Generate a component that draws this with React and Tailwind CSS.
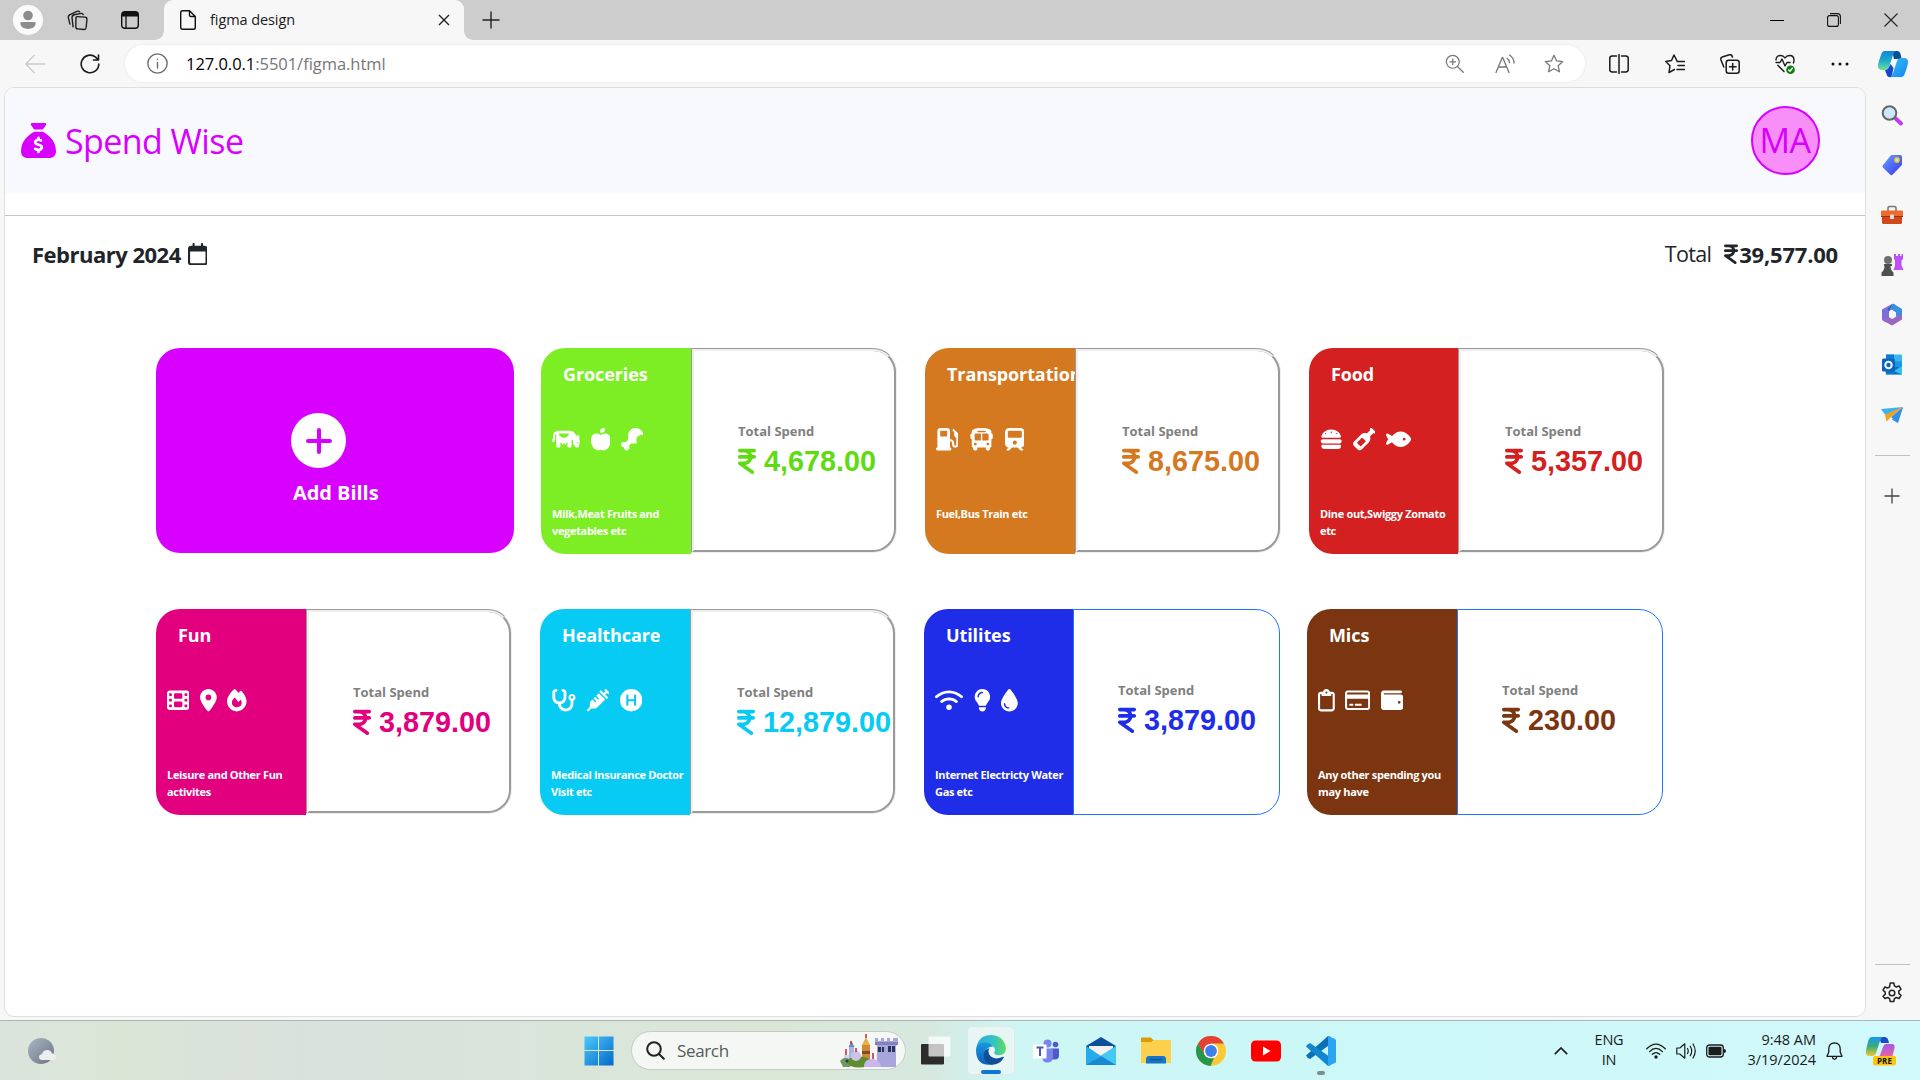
import React from "react";
import {
  FaCow, FaAppleWhole, FaDrumstickBite, FaGasPump, FaBus, FaTrain, FaBurger, FaWineBottle, FaFish,
  FaFilm, FaLocationDot, FaFire, FaStethoscope, FaSyringe, FaCircleH, FaWifi, FaLightbulb, FaDroplet,
  FaRegClipboard, FaRegCreditCard, FaWallet, FaRegCalendar, FaSackDollar, FaPlus, FaIndianRupeeSign,
} from "react-icons/fa6";

const W640 = "w-[28px]";
const W576 = "w-[25.2px]";
const W512 = "w-[22.4px]";
const W448 = "w-[19.6px]";
const W384 = "w-[16.8px]";

const CARDS = [
  { title: "Groceries", icons: [[FaCow, W640], [FaAppleWhole, W448], [FaDrumstickBite, W512]], lines: ["Milk,Meat Fruits and", "vegetables etc"], amount: "4,678.00", bg: "bg-[#7dee24]", fg: "text-[#5edb12]", box: "ml-[27px] w-[356px]", left: "w-[150px]", groove: true },
  { title: "Transportation", icons: [[FaGasPump, W512], [FaBus, W576], [FaTrain, W448]], lines: ["Fuel,Bus Train etc"], amount: "8,675.00", bg: "bg-[#d47920]", fg: "text-[#d47920]", box: "ml-[28px] w-[356px]", left: "w-[150px]", groove: true },
  { title: "Food", icons: [[FaBurger, W512], [FaWineBottle, W512], [FaFish, W576]], lines: ["Dine out,Swiggy Zomato", "etc"], amount: "5,357.00", bg: "bg-[#d42020]", fg: "text-[#d42020]", box: "ml-[28px] w-[356px]", left: "w-[149px]", groove: true },
  { title: "Fun", icons: [[FaFilm, W512], [FaLocationDot, W384], [FaFire, W448]], lines: ["Leisure and Other Fun", "activites"], amount: "3,879.00", bg: "bg-[#e2007f]", fg: "text-[#e2007f]", box: "w-[356px]", left: "w-[150px]", groove: true },
  { title: "Healthcare", icons: [[FaStethoscope, W576], [FaSyringe, W512], [FaCircleH, W512]], lines: ["Medical Insurance Doctor", "Visit etc"], amount: "12,879.00", bg: "bg-[#07cbf3]", fg: "text-[#07cbf3]", box: "ml-[28px] w-[356px]", left: "w-[150px]", groove: true },
  { title: "Utilites", icons: [[FaWifi, W640], [FaLightbulb, W384], [FaDroplet, W384]], lines: ["Internet Electricty Water", "Gas etc"], amount: "3,879.00", bg: "bg-[#1f2de8]", fg: "text-[#1f2de8]", box: "ml-[28px] w-[356px]", left: "w-[149px]", groove: false },
  { title: "Mics", icons: [[FaRegClipboard, W384], [FaRegCreditCard, W576], [FaWallet, W512]], lines: ["Any other spending you", "may have"], amount: "230.00", bg: "bg-[#7b3611]", fg: "text-[#7b3611]", box: "ml-[27px] w-[356px]", left: "w-[150px]", groove: false },
];

function Card({ c }) {
  return (
    <div className={`flex h-[206px] shrink-0 ${c.box}`}>
      <div className={`flex h-full shrink-0 flex-col overflow-hidden rounded-l-[24px] pl-[11px] text-white ${c.bg} ${c.left}`}>
        <div className="mt-[13px] h-[26px] whitespace-nowrap pl-[11px] text-[18px] font-bold leading-[26px] tracking-[-0.1px]">{c.title}</div>
        <div className="mt-[41px] flex h-[23px] items-center gap-[10.5px]">
          {c.icons.map(([I, w], i) => <I key={i} className={`h-[22.4px] shrink-0 ${w}`} />)}
        </div>
        <div className="mt-[54px] whitespace-nowrap text-[11px] font-bold leading-[17px] tracking-[-0.33px]">
          {c.lines.map((l) => <div key={l}>{l}</div>)}
        </div>
      </div>
      <div className={`min-w-0 flex-1 whitespace-nowrap rounded-r-[24px] ${c.groove ? "h-[205px] border-[3px] border-[#eeeeee] pl-[44px] pt-[70px] [border-style:groove]" : "border border-[#1f76fd] pl-[44px] pt-[70px]"}`}>
        <div className="h-[20px] text-[13px] font-bold leading-[20px] text-[#808080]">Total Spend</div>
        <div className={`mt-[5px] flex h-[30px] items-center ${c.fg}`}>
          <FaIndianRupeeSign className="h-[28.8px] w-[18px] shrink-0" />
          <span className="ml-[8px] font-['Liberation_Sans',sans-serif] text-[28.8px] font-bold leading-[30px]">{c.amount}</span>
        </div>
      </div>
    </div>
  );
}

function Ico({ className = "", size = "h-[20px] w-[20px]", children, ...p }) {
  return (
    <svg viewBox="0 0 20 20" fill="none" stroke="currentColor" strokeWidth="1.3" strokeLinecap="round" strokeLinejoin="round" className={`shrink-0 ${size} ${className}`} {...p}>
      {children}
    </svg>
  );
}

const STAR = "M10 1.3l2.6 5.6 6.1.7-4.5 4.1 1.2 6.1-5.4-3-5.4 3 1.2-6.1L1.3 7.6l6.1-.7z";

function TitleBar() {
  return (
    <div className="flex h-[40px] items-center bg-[#cdcdcd] text-[#1b1b1b]">
      <svg viewBox="0 0 30 30" className="ml-[13px] h-[30px] w-[30px] shrink-0">
        <circle cx="15" cy="15" r="15" fill="#fafafa" />
        <circle cx="15" cy="10.5" r="4.8" fill="#8c8c8c" />
        <path d="M7.5 17h15v1.5c0 3.4-3.4 5.4-7.5 5.4s-7.5-2-7.5-5.4z" fill="#8c8c8c" />
      </svg>
      <Ico className="ml-[24px]" size="h-[21px] w-[21px]">
        <path d="M9.800 6.300l7.400.5q1.900.2 1.800 2.100l-.8 8q-.2 1.800-2 1.700l-6-.6q-1.900-.2-1.800-2.100l.1-8q0-1.700 1.300-1.600z" />
        <path d="M5.800 16 4.800 7.500q-.2-2.300 2-3l6.700-1.300q1.300-.2 2 1.200M2.800 13.500 1.300 7.500q-.4-2.300 1.600-3.200L9.500 1.300q1.500-.5 2.500.4" />
      </Ico>
      <svg viewBox="0 0 18 18" className="ml-[33px] h-[18px] w-[18px] shrink-0">
        <rect x=".7" y=".7" width="16.600" height="16.600" rx="3" fill="none" stroke="#111" strokeWidth="1.400" />
        <path d="M1 3.500Q1 1 3.500 1h11Q17 1 17 3.500V5.500H1z" fill="#111" />
        <path d="M5 5v12" stroke="#111" strokeWidth="1.300" />
      </svg>
      <div className="relative ml-[25px] flex h-[40px] w-[300px] items-center rounded-t-[9px] bg-[#f7f7f7]">
        <div className="absolute bottom-0 left-[-9px] h-[9px] w-[9px] bg-[radial-gradient(circle_at_0_0,#cdcdcd_8.500px,#f7f7f7_9px)]" />
        <div className="absolute bottom-0 right-[-9px] h-[9px] w-[9px] bg-[radial-gradient(circle_at_100%_0,#cdcdcd_8.500px,#f7f7f7_9px)]" />
        <svg viewBox="0 0 16 20" fill="none" stroke="#111" strokeWidth="1.400" strokeLinejoin="round" className="ml-[16px] h-[20px] w-[16px]">
          <path d="M2.500.7h7L15.300 6.500v11q0 1.800-1.800 1.800h-11q-1.800 0-1.800-1.800v-15Q.7.7 2.500.7zM9.500.7v4.500q0 1.300 1.300 1.300h4.500" />
        </svg>
        <span className="ml-[14px] w-[216px] text-[14.500px] tracking-[-0.08px]">figma design</span>
        <svg viewBox="0 0 12 12" className="ml-[12px] h-[12px] w-[12px]" stroke="#222" strokeWidth="1.400"><path d="M1 1l10 10M11 1 1 11" /></svg>
      </div>
      <svg viewBox="0 0 18 18" className="ml-[18px] h-[18px] w-[18px]" stroke="#222" strokeWidth="1.400"><path d="M9 .5v17M.5 9h17" /></svg>
      <div className="ml-auto flex items-center pr-[22px]">
        <div className="h-px w-[14px] bg-black" />
        <svg viewBox="0 0 14 14" className="ml-[43px] h-[14px] w-[14px]" fill="none" stroke="#111" strokeWidth="1.100"><rect x=".6" y="2.600" width="10.800" height="10.800" rx="2" /><path d="M3 .6h7.400q3 0 3 3v7.400" /></svg>
        <svg viewBox="0 0 14 14" className="ml-[43px] h-[14px] w-[14px]" stroke="#222" strokeWidth="1.100"><path d="M.5.5l13 13M13.500.5l-13 13" /></svg>
      </div>
    </div>
  );
}

function Toolbar() {
  return (
    <div className="flex h-[47px] items-center bg-[#f7f7f7] text-[#1b1b1b]">
      <Ico className="ml-[25px] text-[#cacaca]"><path d="M19.500 10H.8M9 1.500.8 10 9 18.500" /></Ico>
      <Ico className="ml-[35px]" strokeWidth="1.600"><path d="M18.800 10a8.800 8.800 0 1 1-3.200-6.800L18 5.500M18.500 1v5h-5" /></Ico>
      <div className="ml-[25px] flex h-[37px] w-[1460px] items-center rounded-full bg-white shadow-[0_0_3px_rgba(0,0,0,0.08)]">
        <Ico className="ml-[22px] text-[#6b6b6b]" size="h-[21px] w-[21px]"><circle cx="10" cy="10" r="9.200" /><path d="M10 9v5.300M10 6v.2" /></Ico>
        <span className="ml-[18px] pt-px text-[16.500px] tracking-[-0.04px] text-[#767676]"><span className="text-black">127.0.0.1</span>:5501/figma.html</span>
        <div className="ml-auto flex items-center text-[#767676]">
          <Ico size="h-[19px] w-[19px]"><circle cx="8.200" cy="8.200" r="6.800" /><path d="M13.200 13.200l6 6M8.200 5.200v6M5.200 8.200h6" /></Ico>
          <Ico className="ml-[31px]"><path d="M1 18.500 7.300 3.500h.4L14 18.500M3.500 13h8M12 4.200q2.500 1.500 2.500 4.500M14.500 1q4.500 3 4.500 8" /></Ico>
          <Ico className="ml-[29px] mr-[21px]"><path d={STAR} /></Ico>
        </div>
      </div>
      <Ico className="ml-[24px]" strokeWidth="1.500"><path d="M7.500 2H3.200Q.8 2 .8 4.400v11.200Q.8 18 3.200 18h4.300M12.500 2h4.300q2.400 0 2.400 2.400v11.200q0 2.400-2.400 2.400h-4.300M10 0v20" /></Ico>
      <Ico className="ml-[36px]" strokeWidth="1.500"><path d="M11.800 6.500 9 1 6.500 6.500.8 7.500l4.200 4.200L4 18.500l5.500-3M12 7.500h7.500M13 11.500h6.500M12 15.500h7.500" /></Ico>
      <Ico className="ml-[35px]" strokeWidth="1.500"><rect x="6.200" y="6.200" width="13" height="13" rx="2.500" /><path d="M12.700 9.500v6.500M9.500 12.700H16M3.800 13 1 6q-.8-2.200 1.300-3l7-2.200q2-.6 2.800 1.300l.3.900" /></Ico>
      <Ico className="ml-[35px]" strokeWidth="1.400"><path d="M1 8.500h4l2-3.500 3 7 2-3.500h3M1 6q0-4.500 4.500-4.500Q8.500 1.500 10 4q1.500-2.500 4.500-2.500Q19 1.500 19 6q0 1.500-.6 3M2.800 11.200 9 17.500" /><circle cx="15.500" cy="15.700" r="4.300" fill="#107c10" stroke="none" /><path d="M13.700 16l1.300 1.200 2.300-2.900" stroke="#fff" /></Ico>
      <svg viewBox="0 0 18 4" className="ml-[36px] h-[4px] w-[18px]" fill="#111"><circle cx="2" cy="2" r="1.500" /><circle cx="9" cy="2" r="1.500" /><circle cx="16" cy="2" r="1.500" /></svg>
      <svg viewBox="0 0 30 28" className="ml-[29px] h-[28px] w-[30px]">
        <defs>
          <linearGradient id="cpa" x1="0" y1="0" x2="0" y2="1"><stop offset="0" stopColor="#1186d8" /><stop offset=".5" stopColor="#1fa8c9" /><stop offset="1" stopColor="#6fe09a" /></linearGradient>
          <linearGradient id="cpb" x1="0" y1="0" x2="1" y2="1"><stop offset="0" stopColor="#33c3f5" /><stop offset="1" stopColor="#1583f0" /></linearGradient>
        </defs>
        <path d="M14 1h5q3 0 3.800 4l.7 4H16z" fill="#0a4f96" />
        <path d="M7 1h11q-2 1-3 4l-4 12q-1 3-4 3H4q-4 0-4-4 0-3 3-11 1-4 4-4z" fill="url(#cpa)" />
        <path d="M7 20q3 0 4-3l1.500-3 3 4-2 9q-4 1-5-3z" fill="#1746c9" />
        <path d="M23 27H12q2-1 3-4l4-12q1-3 4-3h3q4 0 4 4 0 3-3 11-1 4-4 4z" fill="url(#cpb)" />
      </svg>
    </div>
  );
}

function SideBar() {
  return (
    <div className="flex w-[54px] shrink-0 flex-col items-center bg-[#f7f7f7] pr-[2px] pt-[16px]">
      <div className="flex flex-col items-center gap-[26px]">
        <svg viewBox="0 0 24 24" className="h-[24px] w-[24px]"><path d="M14.500 14.500l6.500 6" stroke="#c13bf2" strokeWidth="4" strokeLinecap="round" /><circle cx="9.500" cy="10" r="6.800" fill="#c9e8fb" stroke="#666" strokeWidth="2" /></svg>
        <svg viewBox="0 0 24 24" className="h-[24px] w-[24px]"><defs><linearGradient id="tag" x1="0" y1="0" x2="1" y2="1"><stop stopColor="#69a3ff" /><stop offset="1" stopColor="#3533ef" /></linearGradient></defs><path d="M12 2h8q2 0 2 2v7q0 1-.8 1.800l-8.500 8.700q-1.300 1.300-2.600 0l-7-6.800q-1.300-1.300 0-2.600L10.500 2.700Q11 2 12 2z" fill="url(#tag)" /><circle cx="17" cy="7" r="2.200" fill="#bde0ff" stroke="#f5c518" strokeWidth="1.400" /></svg>
        <svg viewBox="0 0 24 24" className="h-[24px] w-[24px]"><path d="M8 8V5q0-1.500 1.500-1.500h5Q16 3.500 16 5v3" fill="none" stroke="#777" strokeWidth="1.600" /><rect x="2" y="10" width="20" height="11" rx="1.500" fill="#d3481a" /><rect x="1" y="7.500" width="22" height="6" rx="1" fill="#ee6a2c" /><path d="M1 13.500h22" stroke="#9e2f0c" /><rect x="10" y="11.500" width="4" height="4.500" rx=".8" fill="#d7dde2" /></svg>
        <svg viewBox="0 0 24 24" className="h-[24px] w-[24px]"><path d="M14 1h2v2h2V1h2v2h1.500V1H23v5l-1.500 1.500v5L23.500 17h-10l1.500-4.500v-5L14 6z" fill="#bd4ff5" /><circle cx="8" cy="7" r="4" fill="#707070" /><path d="M4 11h8v2h-1.500q0 4 3 6.500v3.500h-12v-3.500q3-2.500 3-6.500H4z" fill="#505050" /></svg>
        <svg viewBox="0 0 24 24" className="h-[24px] w-[24px]"><path d="M12 1 2 6.500v10l4 3 3-4.500V8.500L14 4z" fill="#7b6fd6" /><path d="M12 1q1-.5 2 0l8 5v9l-1 1.500-5-3V9.500L10.500 6z" fill="#3a8fe0" /><path d="M22 12v4.500L13 22q-1 .5-2 0l-9-5 4-1.500 5-2 2 2 5-3z" fill="#9a68c4" /><path d="M9 9l3-2 4 2.500v4L12 16l-3-2z" fill="#f7f7f7" /><path d="M9 8.500 12 1 8 6l1 2.500z" fill="#2d5ab4" /></svg>
        <svg viewBox="0 0 24 24" className="h-[24px] w-[24px]"><rect x="6" y="1.500" width="16" height="20" rx="1" fill="#35b8f1" /><path d="M6 1.500h8v7H6z" fill="#0f78d4" /><path d="M14 8.500h8v6h-8z" fill="#1a93e0" /><path d="M5 14h17v7.500H6z" fill="#1273c9" /><path d="M22 13l-8 5 8 3.500z" fill="#33c1f2" /><rect x="2" y="5.500" width="13" height="13" rx="1.500" fill="#0b64c0" /><circle cx="8.500" cy="12" r="3.200" fill="none" stroke="#fff" strokeWidth="2" /></svg>
        <svg viewBox="0 0 24 24" className="h-[24px] w-[24px]"><path d="M1 6 23 4 6 13z" fill="#39b2f3" /><path d="M23 4 18 20l-6-3.500z" fill="#2488e8" /><path d="M23 4 11 14l6 5.500z" fill="#2f90f0" /><path d="M23 4 5 11.500l1.500 7L11 14z" fill="#f4a21a" /></svg>
      </div>
      <div className="mt-[28px] h-px w-[35px] bg-[#c0c0c0]" />
      <svg viewBox="0 0 16 16" className="mt-[32px] h-[16px] w-[16px]" stroke="#444" strokeWidth="1.300"><path d="M8 .5v15M.5 8h15" /></svg>
      <div className="mb-[16px] mt-auto h-px w-[35px] bg-[#c0c0c0]" />
      <svg viewBox="0 0 24 24" className="mb-[15px] h-[24px] w-[24px]" fill="none" stroke="#222" strokeWidth="1.500" strokeLinejoin="round"><path d="M10.200 2h3.600l.6 2.900 1.900 1.100 2.800-1 1.900 3.200-2.200 1.900v2.300l2.200 1.900-1.900 3.200-2.800-1-1.900 1.100-.6 2.900h-3.600l-.6-2.900-1.900-1.100-2.800 1L3 15.300l2.200-1.900v-2.300L3 9.200 4.900 6l2.800 1 1.900-1.100z" /><circle cx="12" cy="12" r="2.800" /></svg>
    </div>
  );
}

function Castle() {
  return (
    <svg viewBox="0 0 58 34" className="h-[34px] w-[58px]">
      <path d="M4 21h7v12H4z" fill="#cfd8ef" /><path d="M0 27q5-6 10-1v7H3z" fill="#6e9a62" />
      <path d="M9 12h5v15H9z" fill="#a9b6dc" /><path d="M8.500 13 11.500 7l3 6z" fill="#7188b8" />
      <path d="M22 11h8v18h-8z" fill="#d08a35" /><path d="M22 11l4-8 4 8z" fill="#ecae47" /><path d="M22 17h8v3h-8z" fill="#7b4d2c" />
      <ellipse cx="19" cy="28" rx="12" ry="5.500" fill="#5f8c2f" /><circle cx="16" cy="22" r="5" fill="#cfc2e8" />
      <path d="M35 4h3v3h3V4h3v3h3V4h3v3h3V4h5v6l-2 2v21H37V12l-2-2z" fill="#a8a4dc" /><path d="M35 8h23v3H35z" fill="#8580bf" />
      <path d="M38 13h3v5h-3zM42 13h2v5h-2zM48 12h3v6h-3zM52 12h3v6h-3z" fill="#27345a" />
      <path d="M24 33q0-8 8-8t9 8z" fill="#c9b6ec" />
      <path d="M26 0v4M11 7v3M6 15v6M16 14v4M33 19v6" stroke="#c2304e" strokeWidth="1.600" />
      <circle cx="7" cy="27" r="1.500" fill="#27345a" />
    </svg>
  );
}

function TaskBar() {
  return (
    <div className="flex h-[60px] items-center border-t border-[#a9b6b2] bg-[linear-gradient(90deg,#dae4dc_0,#dbe5d6_120px,#d9e1dd_300px,#dae5da_560px,#dae7d6_780px,#d6e8df_930px,#cdf6f4_1010px,#cbf7f7_1300px,#d2f9fb_1920px)] text-[#1b1b1b]">
      <svg viewBox="0 0 30 28" className="ml-[27px] h-[28px] w-[30px] shrink-0"><defs><linearGradient id="moon" x1="0" y1="0" x2="1" y2="1"><stop stopColor="#aab6c6" /><stop offset="1" stopColor="#6c7480" /></linearGradient></defs><circle cx="14" cy="14" r="13" fill="url(#moon)" /><path d="M15 23q-3-.3-3-3 0-2.500 3-3 1-4 5.500-4 3.500 0 4.500 3.500 4 0 4 3.500 0 3-3 3z" fill="#eceef2" /></svg>
      <svg viewBox="0 0 30 30" className="ml-[527px] h-[30px] w-[30px] shrink-0"><defs><linearGradient id="win" x1="0" y1="0" x2="1" y2="1"><stop stopColor="#4bc9fb" /><stop offset="1" stopColor="#0568c8" /></linearGradient></defs><path d="M.5.500h13.500v13.500H.5zM15 .5h14.500v13.500H15zM.5 15h13.500v14.500H.5zM15 15h14.500v14.500H15z" fill="url(#win)" /></svg>
      <div className="ml-[17px] flex h-[39px] w-[275px] shrink-0 items-center rounded-full border border-[#c3ccc6] bg-[#f4f7f4]">
        <svg viewBox="0 0 19 19" className="ml-[14px] h-[19px] w-[19px]" fill="none" stroke="#222" strokeWidth="2" strokeLinecap="round"><circle cx="8" cy="8" r="6.800" /><path d="M13 13l4.800 4.800" /></svg>
        <span className="ml-[12px] text-[17px] tracking-[-0.35px] text-[#555b58]">Search</span>
        <div className="ml-auto mr-[7px]"><Castle /></div>
      </div>
      <svg viewBox="0 0 30 30" className="ml-[15px] h-[30px] w-[30px] shrink-0"><rect x="0" y="8" width="23" height="20.500" rx="1" fill="#2c2c2c" /><rect x="7.500" y=".5" width="22" height="20" rx="1" fill="#fff" fillOpacity=".72" /></svg>
      <div className="ml-[16px] flex h-[49px] w-[48px] shrink-0 flex-col items-center rounded-[5px] border border-[#dcebe8] bg-[#e8f6f3] pt-[8px]">
        <svg viewBox="0 0 30 30" className="h-[30px] w-[30px] shrink-0">
          <defs><linearGradient id="eg" x1="0" x2="1"><stop stopColor="#2ba9e6" /><stop offset=".6" stopColor="#35c5c0" /><stop offset="1" stopColor="#64dc5a" /></linearGradient><linearGradient id="eb" x1="0" y1="0" x2="0" y2="1"><stop stopColor="#1b98dc" /><stop offset="1" stopColor="#0b5fbe" /></linearGradient></defs>
          <path d="M.5 12Q3 0 15 0q9 0 13 7 4 7 0 11.500-3 2.500-7.500 1.500-3-.8-2-3 1.500-4-2.500-6.500Q8 7 .5 12z" fill="url(#eg)" />
          <path d="M0 15q0-7 8-7.500 6 0 9 4-5 0-7 4-2 6 2.500 10.500 2 2 5 3.500Q0 32 0 15z" fill="url(#eb)" />
          <path d="M11.500 14q-5 3-3.500 9 2 6 8 6.800 8 0 12-7.500 0-1-1-.5Q17 26 13 19q-1.500-3 .5-6z" fill="#124e95" />
        </svg>
        <div className="mt-[5px] h-[4px] w-[20px] shrink-0 rounded-full bg-[#0a78d4]" />
      </div>
      <svg viewBox="0 0 28 24" className="ml-[17px] h-[24px] w-[28px] shrink-0"><circle cx="15.500" cy="4.500" r="4" fill="#7b83eb" /><circle cx="23.500" cy="5.500" r="2.800" fill="#5059c9" /><path d="M20 9.500h7v7q0 4-4 4h-3z" fill="#5059c9" /><path d="M10 9.500h11v8q0 6-5.500 6T10 17.500z" fill="#7b83eb" /><rect x="1" y="5.500" width="13.500" height="14" fill="#fff" /><path d="M4.500 8.500h7M8 8.500v8.500" stroke="#4b53bc" strokeWidth="2" /></svg>
      <svg viewBox="0 0 30 28" className="ml-[26px] h-[28px] w-[30px] shrink-0"><path d="M0 9 15 0l15 9v5H0z" fill="#0b4f9c" /><path d="M3 9h24v10H3z" fill="#f1f1f1" /><path d="M0 9l15 10L30 9v19H0z" fill="#29aae8" /><path d="M30 9 8 23l22 5z" fill="#46c8f5" /><path d="M0 28 15 19l15 9z" fill="#1688d4" /></svg>
      <svg viewBox="0 0 30 27" className="ml-[25px] h-[27px] w-[30px] shrink-0"><path d="M0 1.500Q0 .5 1 .5h9l3 3.500h-2v4H0z" fill="#dd9a07" /><path d="M0 5h10l3-2h16q1 0 1 1v22H0z" fill="#fcd04c" /><path d="M5 26.500v-4Q5 19 8 19h14q3 0 3 3.500v4z" fill="#1474c8" /><path d="M9 22.700h12" stroke="#0b4c8e" /></svg>
      <svg viewBox="0 0 30 30" className="ml-[25px] h-[30px] w-[30px] shrink-0"><circle cx="15" cy="15" r="15" fill="#fcc934" /><path d="M2 7.500A15 15 0 0 1 28 7.500H15L8.500 19z" fill="#e24133" /><path d="M2 7.500 8.600 18.800Q12 23 18 22l-3.500 8A15 15 0 0 1 2 7.500z" fill="#25974a" /><circle cx="15" cy="15" r="7.300" fill="#fff" /><circle cx="15" cy="15" r="5.900" fill="#3f7fec" /></svg>
      <svg viewBox="0 0 30 22" className="ml-[25px] h-[22px] w-[30px] shrink-0"><rect y=".5" width="30" height="21" rx="4.500" fill="#fe0000" /><path d="M12 6.500v9l7.500-4.500z" fill="#fff" /></svg>
      <div className="relative ml-[25px] h-[30px] w-[30px] shrink-0">
        <svg viewBox="0 0 30 30" className="h-[30px] w-[30px]"><path d="M0 19.500 22 0l3 1-1 7.500L4 23Q1 22 0 19.500z" fill="#0a70b8" /><path d="M0 10.500 22 30l3-1-1-8L4 7Q1 8 0 10.500z" fill="#1287cf" /><path d="M22 0l7 3q1 .5 1 1.500v21q0 1-1 1.500l-7 3z" fill="#2aa5f2" /></svg>
        <div className="absolute left-[11px] top-[35px] h-[4px] w-[8px] rounded-full bg-[#7d8c8d]" />
      </div>
      <svg viewBox="0 0 14 8" className="ml-[218px] h-[8px] w-[14px] shrink-0" fill="none" stroke="#1b1b1b" strokeWidth="1.700"><path d="M.8 7.200 7 1l6.200 6.200" /></svg>
      <div className="ml-[24px] w-[34px] shrink-0 pb-px text-center text-[14.500px] leading-[20px] tracking-[-0.2px]">ENG<br />IN</div>
      <svg viewBox="0 0 20 16" className="ml-[20px] h-[16px] w-[20px] shrink-0" fill="none" stroke="#1b1b1b" strokeWidth="1.300" strokeLinecap="round"><path d="M.8 5.800q9.200-9.500 18.400 0M3.600 8.600q6.400-6.400 12.800 0M6.300 11.300q3.700-3.400 7.400 0" /><circle cx="10" cy="14" r="1.700" fill="#1b1b1b" stroke="none" /></svg>
      <svg viewBox="0 0 21 18" className="ml-[10px] h-[18px] w-[21px] shrink-0" fill="none" stroke="#1b1b1b" strokeWidth="1.200" strokeLinecap="round" strokeLinejoin="round"><path d="M.8 6v6h3l5 4.200V1.800l-5 4.200zM11.500 6.500q1.500 2.500 0 5M14.200 4.200q3 4.800 0 9.600M17 2q4.500 7 0 14" /></svg>
      <svg viewBox="0 0 20 14" className="ml-[9px] h-[14px] w-[20px] shrink-0"><rect x=".7" y="1" width="16.600" height="12" rx="2.800" fill="none" stroke="#1b1b1b" strokeWidth="1.300" /><rect x="2.500" y="2.800" width="13" height="8.400" rx="1.300" fill="#1b1b1b" /><path d="M18 5q2 0 2 2t-2 2z" fill="#1b1b1b" /></svg>
      <div className="ml-[12px] w-[78px] shrink-0 whitespace-nowrap pb-[2px] text-right text-[14.500px] leading-[20px] tracking-[-0.02px]">9:48 AM<br />3/19/2024</div>
      <svg viewBox="0 0 17 18" className="ml-[10px] h-[18px] w-[17px] shrink-0" fill="none" stroke="#1b1b1b" strokeWidth="1.300" strokeLinejoin="round"><path d="M8.500.8Q3 1 2.800 6.500V10L1 14.300h15L14.200 10V6.500Q14 1 8.500.8zM6.300 15q.5 2.300 2.200 2.300T10.700 15" /></svg>
      <svg viewBox="0 0 30 30" className="ml-[23px] h-[30px] w-[30px] shrink-0"><defs><linearGradient id="pa" x1="0" y1="0" x2="0" y2="1"><stop stopColor="#1399ea" /><stop offset=".5" stopColor="#3cad7a" /><stop offset="1" stopColor="#f0c72c" /></linearGradient><linearGradient id="pb" x1="0" y1="0" x2="0" y2="1"><stop stopColor="#a259e8" /><stop offset="1" stopColor="#f2649a" /></linearGradient></defs><path d="M13 1h6q3 0 4 6h-8z" fill="#1d4bd0" /><path d="M6 1h11q-2 1-3 4l-4 12q-1 3-4 3H3q-3 0-3-4 0-3 2-10 1-5 4-5z" fill="url(#pa)" /><path d="M20 8h6q3 0 2.500 4L26 22H10q3 0 4-3l3-8q1-3 3-3z" fill="url(#pb)" /><rect x="7" y="20" width="23" height="9.500" rx="2" fill="#fbc70c" /><text x="18.500" y="27.600" fontSize="8" fontWeight="700" textAnchor="middle" fill="#111" fontFamily="Open Sans, sans-serif">PRE</text></svg>
    </div>
  );
}

export default function App() {
  return (
    <div className="flex h-[1080px] w-[1920px] flex-col overflow-hidden bg-[#f7f7f7] font-['Open_Sans','Noto_Sans',sans-serif]">
      <TitleBar />
      <Toolbar />
      <div className="flex h-[933px] shrink-0">
        <div className="ml-[4px] h-[930px] w-[1862px] shrink-0 overflow-hidden rounded-[10px] border border-[#dedede] bg-white">
          <div className="flex h-[105px] items-center bg-[#f8f9fc] text-[#d800ff]">
            <FaSackDollar className="ml-[16px] h-[35px] w-[35px]" />
            <span className="ml-[9px] text-[34px] leading-[40px] tracking-[-0.58px]">Spend Wise</span>
            <div className="ml-auto mr-[45px] flex h-[69px] w-[69px] items-center justify-center rounded-full border-2 border-[#d800ff] bg-[#f88ff8] pr-px text-[34px] tracking-[-0.5px]">MA</div>
          </div>
          <div className="mt-[22px] h-px bg-[#c4c5c6]" />
          <div className="mt-[23px] flex h-[30px] items-center text-[22px] text-[#212529]">
            <span className="ml-[27px] font-bold tracking-[-0.5px]">February 2024</span>
            <FaRegCalendar className="ml-[7px] h-[22.4px] w-[19.6px]" />
            <span className="ml-auto pt-px text-[21.500px] tracking-[-0.700px]">Total</span>
            <FaIndianRupeeSign className="ml-[13px] h-[22.4px] w-[14px]" />
            <span className="ml-px mr-[27px] font-bold tracking-[-0.2px]">39,577.00</span>
          </div>
          <div className="ml-[151px] mt-[79px] flex">
            <div className="h-[205px] w-[358px] shrink-0 rounded-[24px] bg-[#d800ff] pt-[65px] text-white">
              <div className="ml-[135px] flex h-[55px] w-[55px] items-center justify-center rounded-full bg-white text-[#d800ff]"><FaPlus className="h-[32px] w-[28px]" /></div>
              <div className="ml-[137px] mt-[11px] text-[20px] font-bold leading-[28px] tracking-[-0.05px]">Add Bills</div>
            </div>
            {CARDS.slice(0, 3).map((c) => <Card key={c.title} c={c} />)}
          </div>
          <div className="ml-[151px] mt-[55px] flex">
            {CARDS.slice(3).map((c) => <Card key={c.title} c={c} />)}
          </div>
        </div>
        <SideBar />
      </div>
      <TaskBar />
    </div>
  );
}
